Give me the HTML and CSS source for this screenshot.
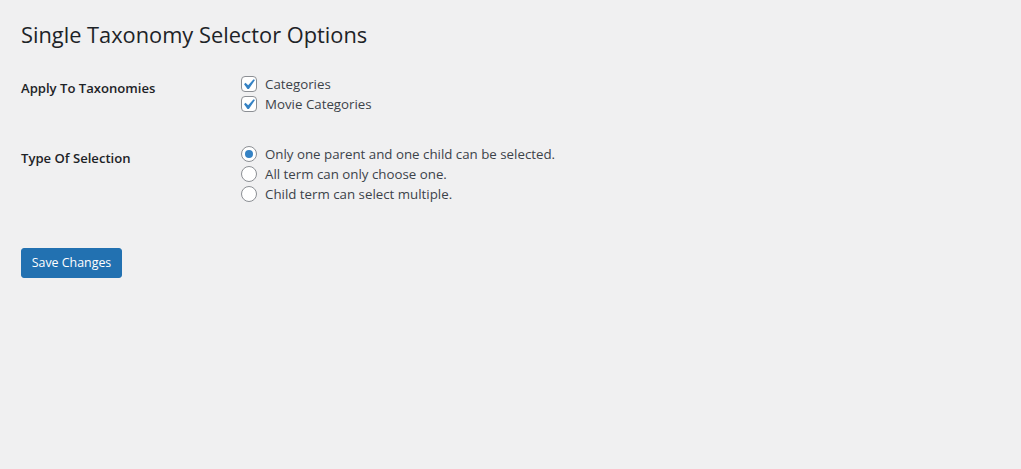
FILE: index.html
```html
<!DOCTYPE html>
<html lang="en">
<head>
<meta charset="utf-8">
<title>Single Taxonomy Selector Options</title>
<link rel="stylesheet" href="styles.css">
</head>
<body>
<div class="wrap">
  <h1 class="title">Single Taxonomy Selector Options</h1>
  <form class="settings">
    <div class="form-row">
      <div class="row-label">Apply To Taxonomies</div>
      <div class="row-field">
        <label class="option"><span class="checkbox checked"><svg class="check" viewBox="0 0 20 20" width="21" height="21"><path d="M14.83 4.89l1.34.94-5.81 8.38H9.02L5.78 9.67l1.34-1.25 2.57 2.4z" fill="#3582c4"/></svg></span><span class="option-text">Categories</span></label>
        <label class="option"><span class="checkbox checked"><svg class="check" viewBox="0 0 20 20" width="21" height="21"><path d="M14.83 4.89l1.34.94-5.81 8.38H9.02L5.78 9.67l1.34-1.25 2.57 2.4z" fill="#3582c4"/></svg></span><span class="option-text">Movie Categories</span></label>
      </div>
    </div>
    <div class="form-row">
      <div class="row-label">Type Of Selection</div>
      <div class="row-field">
        <label class="option"><span class="radio checked"></span><span class="option-text">Only one parent and one child can be selected.</span></label>
        <label class="option"><span class="radio"></span><span class="option-text">All term can only choose one.</span></label>
        <label class="option"><span class="radio"></span><span class="option-text">Child term can select multiple.</span></label>
      </div>
    </div>
    <div class="submit">
      <button type="button" class="button-primary">Save Changes</button>
    </div>
  </form>
</div>
</body>
</html>
```
FILE: styles.css
```css
html, body {
  margin: 0;
  padding: 0;
  background: #f0f0f1;
}
body {
  font-family: "Open Sans", "Noto Sans", sans-serif;
  color: #3c434a;
  font-size: 13.3px;
}
.wrap {
  padding: 11px 20px 0 21px;
}
.title {
  margin: 0;
  padding: 9px 0 4px;
  font-size: 21.8px;
  font-weight: 400;
  line-height: 30px;
  color: #1d2327;
}
.settings {
  margin-top: 5px;
}
.form-row {
  display: grid;
  grid-template-columns: 220px 1fr;
}
.row-label {
  padding: 20px 0;
  font-size: 13.1px;
  font-weight: 600;
  line-height: 18px;
  color: #1d2327;
}
.row-field {
  padding: 15px 0;
  display: flex;
  flex-direction: column;
}
.option {
  display: flex;
  align-items: center;
  gap: 8px;
  height: 20px;
}
.option-text {
  line-height: 20px;
}
.checkbox, .radio {
  box-sizing: border-box;
  width: 16px;
  height: 16px;
  border: 1px solid #8c8f94;
  background: #fff;
  flex: none;
  position: relative;
}
.checkbox {
  border-radius: 4px;
}
.check {
  position: absolute;
  left: -4px;
  top: -3px;
}
.radio {
  border-radius: 50%;
  display: flex;
  align-items: center;
  justify-content: center;
}
.radio.checked::before {
  content: "";
  width: 8px;
  height: 8px;
  border-radius: 50%;
  background: #3582c4;
}
.submit {
  padding-top: 29px;
}
.button-primary {
  box-sizing: border-box;
  height: 30px;
  width: 101px;
  padding: 0;
  white-space: nowrap;
  border: 1px solid #2271b1;
  border-radius: 3px;
  background: #2271b1;
  color: #fff;
  font-family: "Open Sans", "Noto Sans", sans-serif;
  font-size: 12.4px;
  line-height: 28px;
  cursor: pointer;
}
```
